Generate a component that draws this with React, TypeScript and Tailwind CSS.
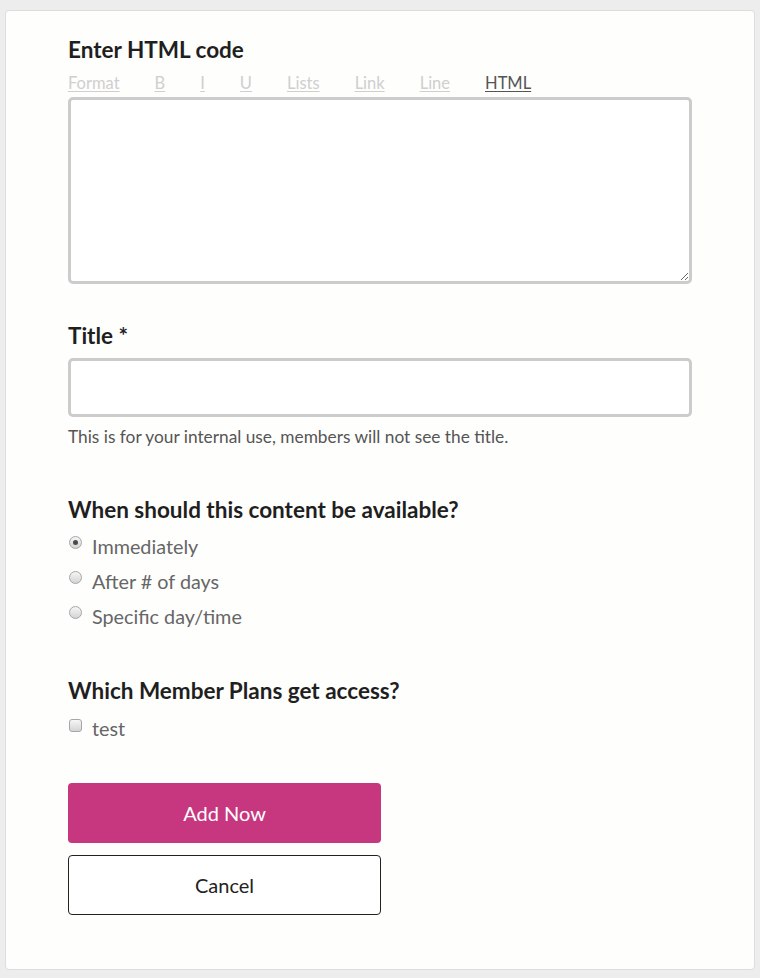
import React from "react";

const tools = ["Format", "B", "I", "U", "Lists", "Link", "Line"];

function Radio({ checked }: { checked?: boolean }) {
  return (
    <span className="mb-[6px] flex h-[13px] w-[13px] shrink-0 items-center justify-center rounded-full border border-[#a6a6a6] bg-linear-to-b from-[#f6f6f6] to-[#d4d4d4]">
      {checked && <span className="h-[5px] w-[5px] rounded-full bg-[#4a4a4a]" />}
    </span>
  );
}

export default function App() {
  return (
    <div
      className="min-h-[978px] bg-[#ededed] px-[5px] pt-[10px] pb-[8px]"
      style={{ fontFamily: "Lato, 'Open Sans', sans-serif" }}
    >
      <div className="rounded-[4px] border border-[#dddddd] bg-[#fefefd] pt-[26px] pb-[54px] pl-[62px]">
        <div className="w-[624px]">
          <h2 className="text-[22.5px] leading-[26px] font-bold text-[#1f1f1f]">Enter HTML code</h2>
          <div className="mt-[10px] flex gap-[35px] text-[16.5px] leading-[20px]">
            {tools.map((t) => (
              <span key={t} className="text-[#cfcfcf] underline underline-offset-2">
                {t}
              </span>
            ))}
            <span className="text-[#555555] underline underline-offset-2">HTML</span>
          </div>
          <textarea className="mt-[4px] block h-[187px] w-[624px] rounded-[5px] border-[3px] border-[#cccccc] bg-white outline-none" />

          <h2 className="mt-[39px] text-[22.5px] leading-[26px] font-bold text-[#1f1f1f]">Title *</h2>
          <input className="mt-[9px] block h-[59px] w-[624px] rounded-[5px] border-[3px] border-[#cccccc] bg-white outline-none" />
          <p className="mt-[10px] text-[17.3px] leading-[20px] text-[#555555]">
            This is for your internal use, members will not see the title.
          </p>

          <h2 className="mt-[50px] text-[22.5px] leading-[26px] font-bold text-[#1f1f1f]">
            When should this content be available?
          </h2>
          <div className="mt-[5px]">
            {[
              ["Immediately", true],
              ["After # of days", false],
              ["Specific day/time", false],
            ].map(([label, checked]) => (
              <div key={label as string} className="flex h-[35px] items-center gap-[10px] pl-[1px]">
                <Radio checked={checked as boolean} />
                <span className="text-[19.8px] leading-[22px] text-[#666666]">{label as string}</span>
              </div>
            ))}
          </div>

          <h2 className="mt-[45px] text-[22.5px] leading-[26px] font-bold text-[#1f1f1f]">
            Which Member Plans get access?
          </h2>
          <div className="mt-[6px] flex h-[35px] items-center gap-[10px] pl-[1px]">
            <span className="mb-[5px] h-[13px] w-[13px] shrink-0 rounded-[3px] border border-[#a6a6a6] bg-linear-to-b from-[#f6f6f6] to-[#d4d4d4]" />
            <span className="text-[19.8px] leading-[22px] text-[#666666]">test</span>
          </div>

          <button className="mt-[38px] block h-[60px] w-[313px] rounded-[4px] bg-[#c6377f] text-[20px] text-white">
            Add Now
          </button>
          <button className="mt-[12px] block h-[60px] w-[313px] rounded-[4px] border border-[#222222] bg-white text-[20px] text-[#222222]">
            Cancel
          </button>
        </div>
      </div>
    </div>
  );
}
